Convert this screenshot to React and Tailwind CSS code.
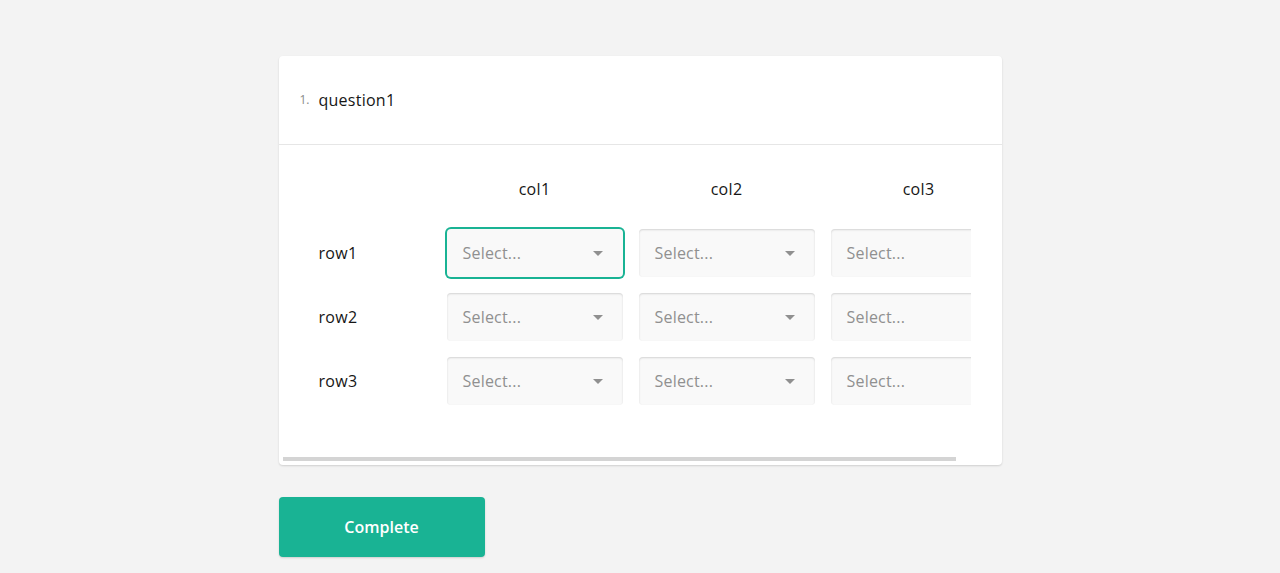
import React from "react";

const columns = ["col1", "col2", "col3"];
const rows = ["row1", "row2", "row3"];

function Caret() {
  return (
    <svg width="10" height="5" viewBox="0 0 10 5" className="shrink-0">
      <path d="M0 0 L10 0 L5 5 Z" fill="#909090" />
    </svg>
  );
}

function Dropdown({ focused }) {
  return (
    <div
      className={
        "flex h-[48px] w-[176px] items-center justify-between rounded-[4px] bg-[#f9f9f9] pl-[16px] pr-[20px] text-[16px] tracking-[0.2px] text-[#909090] " +
        (focused
          ? "ring-2 ring-[#19b394]"
          : "shadow-[inset_0_1px_2px_rgba(0,0,0,0.15)]")
      }
    >
      <span className="leading-[24px]">Select...</span>
      <Caret />
    </div>
  );
}

export default function App() {
  return (
    <div
      className="min-h-screen bg-[#f3f3f3] pt-[56px] text-[#161616]"
      style={{ fontFamily: '"Open Sans", "Noto Sans", sans-serif' }}
    >
      <div className="mx-auto w-[723px]">
        <div className="rounded-[4px] bg-white shadow-[0_1px_2px_rgba(0,0,0,0.15)]">
          <div className="flex items-center border-b border-[#e6e6e6] py-[32px] pl-[21px]">
            <span className="w-[19px] text-[12px] leading-[24px] text-[#8a8a8a]">1.</span>
            <span className="text-[16px] leading-[24px] tracking-[0.25px]">question1</span>
          </div>

          <div className="mr-[31px] overflow-hidden pt-[12px]">
            <div className="flex h-[64px] w-max items-center">
              <div className="w-[160px] shrink-0" />
              {columns.map((c) => (
                <div
                  key={c}
                  className="w-[192px] shrink-0 text-center text-[16px] font-medium leading-[24px] tracking-[0.3px]"
                >
                  {c}
                </div>
              ))}
            </div>
            {rows.map((r, ri) => (
              <div key={r} className="flex h-[64px] w-max items-center">
                <div className="w-[160px] shrink-0 pl-[40px] text-[16px] font-medium leading-[24px] tracking-[0.3px]">
                  {r}
                </div>
                {columns.map((c, ci) => (
                  <div key={c} className="w-[192px] shrink-0 px-[8px]">
                    <Dropdown focused={ri === 0 && ci === 0} />
                  </div>
                ))}
              </div>
            ))}
          </div>

          <div className="pb-[4px] pt-[44px]">
            <div className="ml-[4px] h-[4px] w-[673px] bg-[#d4d4d4]" />
          </div>
        </div>

        <button className="mt-[32px] h-[60px] w-[206px] rounded-[4px] bg-[#19b394] text-[16px] font-semibold text-white shadow-[0_1px_2px_rgba(0,0,0,0.15)]">
          Complete
        </button>
      </div>
    </div>
  );
}
